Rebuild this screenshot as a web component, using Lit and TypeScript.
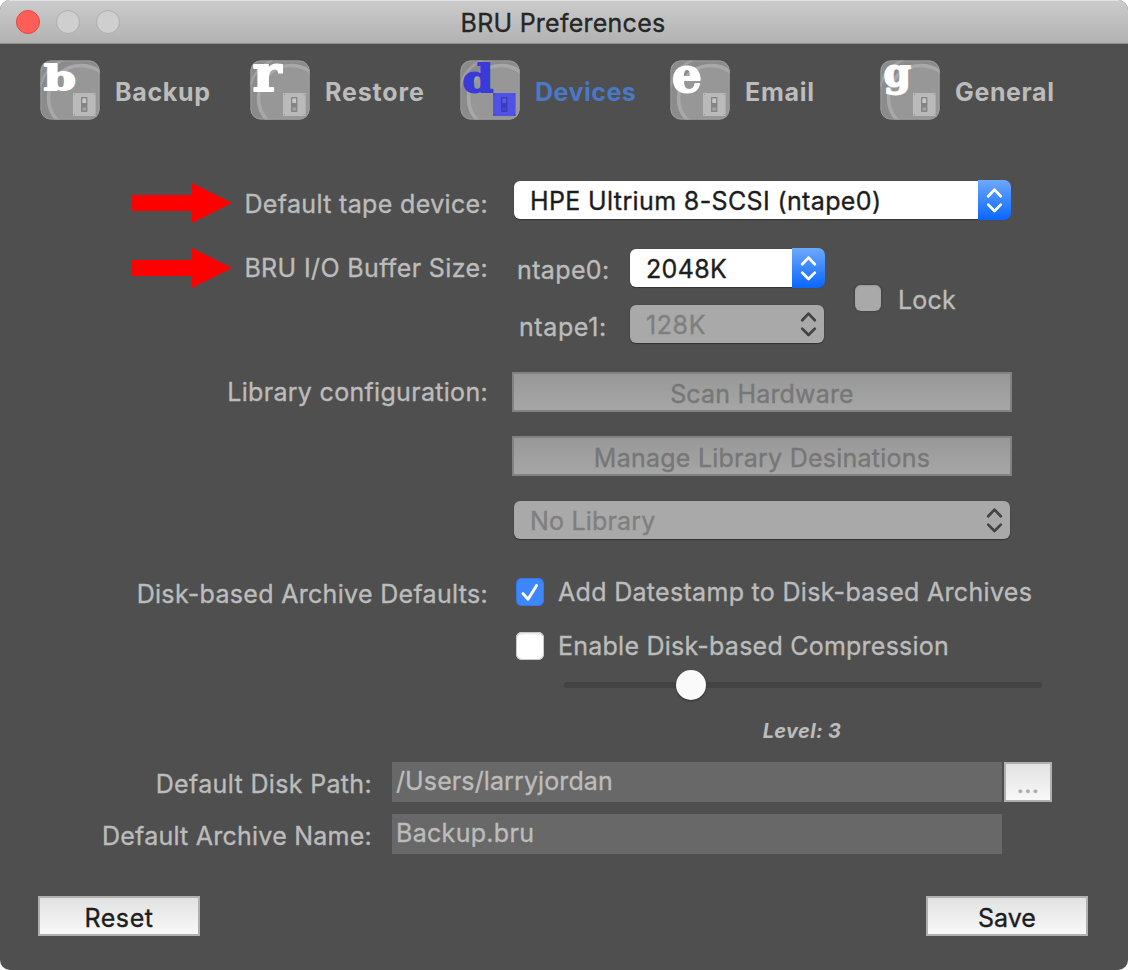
import { LitElement, html, svg, css, nothing } from "lit";
import { customElement, property } from "lit/decorators.js";
import { classMap } from "lit/directives/class-map.js";

interface Tab {
  letter: string;
  label: string;
  cls: string;
  size: number;
  stretch: number;
  x: number;
  y: number;
  active?: boolean;
}

const TABS: Tab[] = [
  { letter: "b", label: "Backup", cls: "ls-backup", size: 34, stretch: 1.34, x: 4, y: 30 },
  { letter: "r", label: "Restore", cls: "ls-restore", size: 50, stretch: 1.1, x: 2.5, y: 31 },
  { letter: "d", label: "Devices", cls: "ls-devices", size: 38, stretch: 1.16, x: 2.6, y: 31.8, active: true },
  { letter: "e", label: "Email", cls: "ls-email", size: 49, stretch: 0.96, x: 2, y: 31.8 },
  { letter: "g", label: "General", cls: "ls-general", size: 40, stretch: 0.98, x: 3.5, y: 25.6 },
];

@customElement("tab-icon")
class TabIcon extends LitElement {
  @property({ attribute: false }) tab!: Tab;

  static styles = css`
    :host { display: block; width: 60px; height: 60px; }
    svg { display: block; overflow: visible; }
    .letter {
      font-family: "DejaVu Serif", serif; font-weight: 700; fill: #fff;
      stroke: #fff; stroke-width: 1.8px; stroke-linejoin: round;
    }
    .plate { fill: #bababa; }
    .screw { fill: #8a8a8a; }
    .slot { fill: #858585; }
    .knob { fill: #c8c8c8; }
    .low { fill: #a2a2a2; }
    .active .letter { fill: #3a3ad8; stroke: #3a3ad8; }
    .active .plate { fill: #5151e6; }
    .active .screw { fill: #3535a8; }
    .active .slot { fill: #3a3abc; }
    .active .knob { fill: #5a5ae4; }
    .active .low { fill: #4747cf; }
  `;

  render() {
    const t = this.tab;
    return html`<svg width="60" height="60" viewBox="0 0 60 60" class=${classMap({ active: !!t.active })}>
      <defs><clipPath id="c"><rect x=".5" y=".5" width="59" height="59" rx="10" /></clipPath></defs>
      <g clip-path="url(#c)">
        <rect width="60" height="60" fill="#8b8b8b" />
        <circle cx="41" cy="38" r="34" fill="#979797" />
        <circle cx="41" cy="38" r="32.5" fill="none" stroke="#a8a8a8" stroke-width="3.6" />
        <path d="M0 27C3 14 11 5 23 0" fill="none" stroke="#a0a0a0" stroke-width="2.5" />
      </g>
      <rect x="1" y="1" width="58" height="58" rx="9.5" fill="none" stroke="#9c9c9c" />
      ${svg`<text class="letter" font-size=${t.size} transform=${`translate(${t.x} ${t.y}) scale(${t.stretch} 1)`}>${t.letter}</text>`}
      <rect class="plate" x="33" y="33" width="22.6" height="23" />
      <g class="screw">
        <circle cx="34.5" cy="34.5" r=".6" /><circle cx="54.2" cy="34.5" r=".6" />
        <circle cx="34.5" cy="54.5" r=".6" /><circle cx="54.2" cy="54.5" r=".6" />
      </g>
      <rect class="slot" x="41" y="37" width="6.4" height="15" rx=".8" />
      <rect class="knob" x="42.3" y="38.4" width="3.8" height="4.6" />
      <rect class="low" x="42.3" y="47.6" width="3.8" height="3" />
    </svg>`;
  }
}

@customElement("popup-button")
class PopupButton extends LitElement {
  @property({ type: Boolean, reflect: true }) disabled = false;

  static styles = css`
    :host {
      display: flex; justify-content: space-between; align-items: center; box-sizing: border-box;
      height: 38px; border-radius: 6px; background: #fff; color: #1d1d1d; padding-left: 16px;
      box-shadow: 0 1px 1px rgba(0, 0, 0, 0.35), 0 0 1px rgba(0, 0, 0, 0.3);
    }
    .text { line-height: 30px; margin-bottom: -1px; white-space: nowrap; }
    .cap {
      width: 33px; height: 40px; margin-right: -1px; flex: none;
      border-radius: 0 7px 7px 0; background: linear-gradient(#6ea8fb, #3f8bfd 45%, #0a66ff);
    }
    :host([disabled]) { background: #a9a9a9; color: #7f7f7f; }
    :host([disabled]) .cap { background: none; }
    svg { display: block; fill: none; stroke: #fff; stroke-width: 2.7; stroke-linecap: round; stroke-linejoin: round; }
    :host([disabled]) svg { stroke: #434343; }
  `;

  render() {
    return html`<span class="text"><slot></slot></span>
      <span class="cap"><svg width="33" height="40" viewBox="0 0 33 40">
        <path d="M10.2 16.2 16.5 9.6 22.8 16.2M10.2 24.6 16.5 31 22.8 24.6" />
      </svg></span>`;
  }
}

@customElement("check-box")
class CheckBox extends LitElement {
  @property({ type: Boolean, reflect: true }) checked = false;
  @property({ type: Boolean, reflect: true }) disabled = false;

  static styles = css`
    :host {
      display: block; flex: none; box-sizing: border-box; width: 28px; height: 28px; border-radius: 6px;
      background: #fff; box-shadow: inset 0 0 0 1px #c9c9c9, inset 0 2px 2px #e2e2e2;
    }
    :host([checked]) { background: #3d87fb; box-shadow: inset 0 0 0 1px #3478ea; }
    :host([disabled]) {
      width: 26px; height: 26px; background: #a9a9a9;
      box-shadow: 0 0 2px rgba(0, 0, 0, 0.45), inset 0 1px 1px #9a9a9a;
    }
    svg { display: block; fill: none; stroke: #fff; stroke-width: 2.9; stroke-linecap: round; stroke-linejoin: round; }
  `;

  render() {
    return this.checked
      ? html`<svg width="28" height="28" viewBox="0 0 28 28"><path d="M7 15.6 12 21.2 20.6 7.4" /></svg>`
      : nothing;
  }
}

@customElement("app-root")
class AppRoot extends LitElement {
  static styles = css`
    :host { display: block; background: #fff; }
    .window {
      width: 1128px; height: 970px; box-sizing: border-box; overflow: hidden; border-radius: 10px;
      background: #4f4f4f; color: #bcbcbc; display: flex; flex-direction: column;
      font: 400 25px/30px Inter, sans-serif; letter-spacing: 0.34px; white-space: nowrap;
      -webkit-text-stroke: 0.35px currentColor;
    }
    .titlebar {
      height: 44px; box-sizing: border-box; flex: none; display: grid; grid-template-columns: 1fr auto 1fr;
      background: linear-gradient(#cbcbcb, #b2b2b2); color: #262626;
      border-top: 1px solid #e2e2e2; border-bottom: 1px solid #8f8f8f;
    }
    .lights { display: flex; gap: 16px; padding: 9px 0 0 16px; }
    .light { box-sizing: border-box; width: 24px; height: 24px; border-radius: 50%; background: #cfcfcf; border: 1px solid #adadad; }
    .light.close { background: #ff5f57; border-color: #e2463f; }
    .title { padding: 7px 2px 0 0; letter-spacing: 0.25px; }
    .tabs { display: flex; padding: 16px 0 0 40px; height: 120px; flex: none; }
    .tab { width: 210px; display: flex; font-weight: 700; }
    .tab-label { padding: 17px 0 0 15px; -webkit-text-stroke: 0; }
    .tab.active { color: #4a78c6; }

    .row { display: flex; align-items: flex-start; flex: none; }
    .label { width: 488px; box-sizing: border-box; flex: none; text-align: right; }
    .label.marked { display: flex; justify-content: space-between; padding-left: 132px; }
    .arrow { display: block; fill: #f00; stroke: none; }
    .device { height: 68px; }
    .device .caption { padding-top: 9px; }
    .device .arrow { margin-top: 3px; }
    .device popup-button { width: 496px; margin: 1px 0 0 26px; }
    .buffer { height: 124px; }
    .buffer .caption { padding-top: 5px; }
    .sizes { display: grid; grid-template-columns: 113px 195px; row-gap: 18px; margin: 1px 0 0 29px; }
    .sizes popup-button { width: 194px; }
    .sizes .name { padding-top: 6px; }
    .sizes .second { padding: 7px 0 0 2px; }
    .lock { display: flex; gap: 17px; padding: 37px 0 0 30px; }
    .library { height: 206px; }
    .library .label { padding-top: 5px; }
    .stack { display: flex; flex-direction: column; width: 500px; margin-left: 24px; }
    .stack popup-button { margin: 25px 2px 0; }
    .push {
      box-sizing: border-box; height: 40px; border: 2px solid #b0b0b0; background: linear-gradient(#e2e2e2, #f8f8f8);
      color: #1d1d1d; text-align: center; padding-top: 5px;
    }
    .push.off { border-color: #828282; background: linear-gradient(#989898, #a6a6a6); color: #777; }
    .push.off + .push.off { margin-top: 24px; }
    .archive { height: 184px; }
    .archive .label { padding-top: 1px; }
    .options { margin-left: 28px; }
    .option { display: flex; gap: 14px; height: 54px; }
    .option .text { margin-top: -1px; }
    .slider { width: 478px; height: 6px; margin: -4px 0 0 48px; border-radius: 3px; background: #434343; display: flex; align-items: center; }
    .thumb { width: 30px; height: 30px; margin-left: 112px; border-radius: 50%; background: #fafafa; box-shadow: 0 1px 2px rgba(0, 0, 0, 0.4); }
    .level { width: 478px; margin: 28px 0 0 47px; text-align: center; font: italic 700 20px/30px Inter, sans-serif; -webkit-text-stroke: 0; }
    .field-row { height: 52px; }
    .field-row .label { width: 372px; padding-top: 7px; }
    .field { width: 610px; height: 40px; box-sizing: border-box; margin-left: 20px; padding: 4px 0 0 4px; background: #686868; }
    .browse { width: 48px; margin-left: 2px; color: #a9a9a9; }
    .footer { display: flex; justify-content: space-between; padding: 30px 40px 0 38px; }
    .footer .push { width: 162px; }

    .ls-backup { letter-spacing: 0.7px; }
    .ls-restore { letter-spacing: 0.85px; }
    .ls-devices { letter-spacing: 0.5px; }
    .ls-email { letter-spacing: 0.75px; }
    .ls-general { letter-spacing: 0.62px; }
    .ls-45 { letter-spacing: 0.37px; }
    .ls-31 { letter-spacing: 0.31px; }
    .ls-26 { letter-spacing: 0.24px; }
    .ls-18 { letter-spacing: 0.18px; }
    .ls-11 { letter-spacing: 0.11px; }
    .ls-70 { letter-spacing: 0.6px; }
    .ls-0 { letter-spacing: 0; }
  `;

  private arrow() {
    return html`<svg class="arrow" width="100" height="40" viewBox="0 0 100 40"><path d="M0 12H60V0L100 20 60 40V28H0Z" /></svg>`;
  }

  render() {
    return html`<div class="window">
      <header class="titlebar">
        <div class="lights"><i class="light close"></i><i class="light"></i><i class="light"></i></div>
        <div class="title">BRU Preferences</div>
      </header>
      <nav class="tabs">
        ${TABS.map((t) => html`<div class=${classMap({ tab: true, active: !!t.active })}>
          <tab-icon .tab=${t}></tab-icon><span class="tab-label ${t.cls}">${t.label}</span>
        </div>`)}
      </nav>
      <main>
        <div class="row device">
          <div class="label marked">${this.arrow()}<span class="caption">Default tape device:</span></div>
          <popup-button class="ls-45">HPE Ultrium 8-SCSI (ntape0)</popup-button>
        </div>
        <div class="row buffer">
          <div class="label marked">${this.arrow()}<span class="caption ls-45">BRU I/O Buffer Size:</span></div>
          <div class="sizes">
            <span class="name ls-45">ntape0:</span><popup-button>2048K</popup-button>
            <span class="second ls-70">ntape1:</span><popup-button disabled class="ls-70">128K</popup-button>
          </div>
          <div class="lock"><check-box disabled></check-box><span class="ls-18">Lock</span></div>
        </div>
        <div class="row library">
          <div class="label ls-31">Library configuration:</div>
          <div class="stack">
            <div class="push off ls-18">Scan Hardware</div>
            <div class="push off ls-26">Manage Library Desinations</div>
            <popup-button disabled class="ls-18">No Library</popup-button>
          </div>
        </div>
        <div class="row archive">
          <div class="label ls-31">Disk-based Archive Defaults:</div>
          <div class="options">
            <div class="option"><check-box checked></check-box><span class="text ls-31">Add Datestamp to Disk-based Archives</span></div>
            <div class="option"><check-box></check-box><span class="text ls-26">Enable Disk-based Compression</span></div>
            <div class="slider"><i class="thumb"></i></div>
            <div class="level">Level: 3</div>
          </div>
        </div>
        <div class="row field-row">
          <div class="label">Default Disk Path:</div>
          <div class="field ls-11">/Users/larryjordan</div>
          <div class="push browse">...</div>
        </div>
        <div class="row field-row">
          <div class="label ls-26">Default Archive Name:</div>
          <div class="field ls-31">Backup.bru</div>
        </div>
      </main>
      <footer class="footer">
        <div class="push ls-70">Reset</div>
        <div class="push ls-0">Save</div>
      </footer>
    </div>`;
  }
}
